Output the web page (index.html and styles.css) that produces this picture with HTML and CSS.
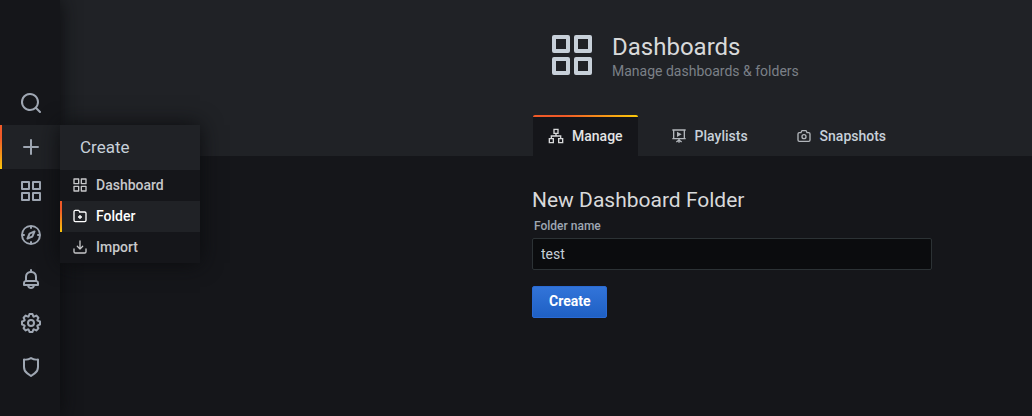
FILE: index.html
```html
<!DOCTYPE html>
<html lang="en">
<head>
<meta charset="utf-8">
<title>Dashboards</title>
<link rel="stylesheet" href="styles.css">
</head>
<body>
<svg class="sprite" aria-hidden="true">
  <symbol id="apps" viewBox="0 0 24 24"><path d="M10,13H3a1,1,0,0,0-1,1v7a1,1,0,0,0,1,1h7a1,1,0,0,0,1-1V14A1,1,0,0,0,10,13ZM9,20H4V15H9ZM21,2H14a1,1,0,0,0-1,1v7a1,1,0,0,0,1,1h7a1,1,0,0,0,1-1V3A1,1,0,0,0,21,2ZM20,9H15V4h5Zm1,4H14a1,1,0,0,0-1,1v7a1,1,0,0,0,1,1h7a1,1,0,0,0,1-1V14A1,1,0,0,0,21,13Zm-1,7H15V15h5ZM10,2H3A1,1,0,0,0,2,3v7a1,1,0,0,0,1,1h7a1,1,0,0,0,1-1V3A1,1,0,0,0,10,2ZM9,9H4V4H9Z"/></symbol>
</svg>
<div class="app">
  <nav class="sidebar" aria-label="Main">
    <a class="side-item" href="#" aria-label="Search"><svg class="icon-lg" viewBox="0 0 24 24"><path d="M21.71,20.29,18,16.61A9,9,0,1,0,16.61,18l3.68,3.68a1,1,0,0,0,1.42,0A1,1,0,0,0,21.71,20.29ZM11,18a7,7,0,1,1,7-7A7,7,0,0,1,11,18Z"/></svg></a>
    <div class="side-group">
      <a class="side-item active" href="#" aria-label="Create"><svg class="icon-lg" viewBox="0 0 24 24"><path d="M19,11H13V5a1,1,0,0,0-2,0v6H5a1,1,0,0,0,0,2h6v6a1,1,0,0,0,2,0V13h6a1,1,0,0,0,0-2Z"/></svg></a>
      <div class="menu">
        <a class="menu-title" href="#">Create</a>
        <a class="menu-item" href="#"><svg class="icon"><use href="#apps"/></svg>Dashboard</a>
        <a class="menu-item current" href="#"><svg class="icon line" viewBox="0 0 24 24"><path d="M5 3.500h4.500a1.500 1.500 0 0 1 1.400 1L11.500 6H19a2 2 0 0 1 2 2v10.500a2 2 0 0 1-2 2H5a2 2 0 0 1-2-2v-13a2 2 0 0 1 2-2zM12 10.500v6M9 13.500h6"/></svg>Folder</a>
        <a class="menu-item" href="#"><svg class="icon" viewBox="0 0 24 24"><path d="M21,14a1,1,0,0,0-1,1v4a1,1,0,0,1-1,1H5a1,1,0,0,1-1-1V15a1,1,0,0,0-2,0v4a3,3,0,0,0,3,3H19a3,3,0,0,0,3-3V15A1,1,0,0,0,21,14Zm-9.71,1.71a1,1,0,0,0,.33.21.94.94,0,0,0,.76,0,1,1,0,0,0,.33-.21l4-4a1,1,0,0,0-1.42-1.42L13,12.59V3a1,1,0,0,0-2,0v9.59l-2.29-2.3a1,1,0,1,0-1.42,1.42Z"/></svg>Import</a>
      </div>
    </div>
    <a class="side-item" href="#" aria-label="Dashboards"><svg class="icon-lg"><use href="#apps"/></svg></a>
    <a class="side-item" href="#" aria-label="Explore"><svg class="icon-lg" viewBox="0 0 24 24"><path d="M12,2A10,10,0,1,0,22,12,10,10,0,0,0,12,2Zm1,17.93V19a1,1,0,0,0-2,0v.93A8,8,0,0,1,4.07,13H5a1,1,0,0,0,0-2H4.07A8,8,0,0,1,11,4.07V5a1,1,0,0,0,2,0V4.07A8,8,0,0,1,19.93,11H19a1,1,0,0,0,0,2h.93A8,8,0,0,1,13,19.93ZM15.14,7.55l-5,2.12a1,1,0,0,0-.52.52l-2.12,5a1,1,0,0,0,.21,1.1,1,1,0,0,0,.7.3.93.93,0,0,0,.4-.09l5-2.12a1,1,0,0,0,.52-.52l2.12-5a1,1,0,0,0-1.31-1.31Zm-2.49,5.1-2.28,1,1-2.28,2.28-1Z"/></svg></a>
    <a class="side-item" href="#" aria-label="Alerting"><svg class="icon-lg" viewBox="0 0 24 24"><path d="M18,13.18V10a6,6,0,0,0-5-5.91V3a1,1,0,0,0-2,0V4.09A6,6,0,0,0,6,10v3.18A3,3,0,0,0,4,16v2a1,1,0,0,0,1,1H8.14a4,4,0,0,0,7.72,0H19a1,1,0,0,0,1-1V16A3,3,0,0,0,18,13.18ZM8,10a4,4,0,0,1,8,0v3H8Zm4,10a2,2,0,0,1-1.72-1h3.44A2,2,0,0,1,12,20Zm6-3H6V16a1,1,0,0,1,1-1H17a1,1,0,0,1,1,1Z"/></svg></a>
    <a class="side-item" href="#" aria-label="Configuration"><svg class="icon-lg" viewBox="0 0 24 24"><path d="M21.32,9.55l-1.89-.63.89-1.78A1,1,0,0,0,20.13,6L18,3.87a1,1,0,0,0-1.15-.19l-1.78.89-.63-1.89A1,1,0,0,0,13.5,2h-3a1,1,0,0,0-.95.68L8.92,4.57,7.14,3.68A1,1,0,0,0,6,3.87L3.87,6a1,1,0,0,0-.19,1.15l.89,1.78-1.89.63A1,1,0,0,0,2,10.5v3a1,1,0,0,0,.68.95l1.89.63-.89,1.78A1,1,0,0,0,3.87,18L6,20.13a1,1,0,0,0,1.15.19l1.78-.89.63,1.89a1,1,0,0,0,.95.68h3a1,1,0,0,0,.95-.68l.63-1.89,1.78.89A1,1,0,0,0,18,20.13L20.13,18a1,1,0,0,0,.19-1.15l-.89-1.78,1.89-.63A1,1,0,0,0,22,13.5v-3A1,1,0,0,0,21.32,9.55ZM20,12.78l-1.2.4A2,2,0,0,0,17.64,16l.57,1.14-1.1,1.1L16,17.64a2,2,0,0,0-2.79,1.16l-.4,1.2H11.22l-.4-1.2A2,2,0,0,0,8,17.64l-1.14.57-1.1-1.1L6.36,16A2,2,0,0,0,5.2,13.18L4,12.78V11.22l1.2-.4A2,2,0,0,0,6.36,8L5.79,6.89l1.1-1.1L8,6.36A2,2,0,0,0,10.82,5.2l.4-1.2h1.56l.4,1.2A2,2,0,0,0,16,6.36l1.14-.57,1.1,1.1L17.64,8a2,2,0,0,0,1.16,2.79l1.2.4ZM12,8a4,4,0,1,0,4,4A4,4,0,0,0,12,8Zm0,6a2,2,0,1,1,2-2A2,2,0,0,1,12,14Z"/></svg></a>
    <a class="side-item" href="#" aria-label="Server Admin"><svg class="icon-lg" viewBox="0 0 24 24"><path d="M19.63,3.65a1,1,0,0,0-.84-.2,8,8,0,0,1-6.22-1.27,1,1,0,0,0-1.14,0A8,8,0,0,1,5.21,3.45a1,1,0,0,0-.84.2A1,1,0,0,0,4,4.43v7.45a9,9,0,0,0,3.77,7.33l3.65,2.6a1,1,0,0,0,1.16,0l3.65-2.6A9,9,0,0,0,20,11.88V4.43A1,1,0,0,0,19.63,3.65ZM18,11.88a7,7,0,0,1-2.93,5.7L12,19.77,8.93,17.58A7,7,0,0,1,6,11.88V5.58a10,10,0,0,0,6-1.39,10,10,0,0,0,6,1.39Z"/></svg></a>
  </nav>
  <main class="main">
    <header class="page-header">
      <div class="heading">
        <svg class="icon-xl"><use href="#apps"/></svg>
        <div>
          <h1 class="title">Dashboards</h1>
          <div class="subtitle">Manage dashboards &amp; folders</div>
        </div>
      </div>
      <nav class="tabs" aria-label="Dashboards sections">
        <a class="tab selected" href="#"><svg class="icon line" viewBox="0 0 24 24"><path d="M9 2h6v6H9zM2 16h6v6H2zM16 16h6v6h-6zM12 8v4M5 16v-4h14v4"/></svg>Manage</a>
        <a class="tab" href="#"><svg class="icon line" viewBox="0 0 24 24"><path d="M2 3h20M4 3v13h16V3M2 16h20M12 16v6M12 18l-4 3M12 18l4 3"/><path d="M9 5.500l7 4-7 4z" fill="currentColor" stroke="none"/></svg>Playlists</a>
        <a class="tab" href="#"><svg class="icon line" viewBox="0 0 24 24"><path d="M5 7h2.500l1-2.300A1 1 0 0 1 9.500 4h5a1 1 0 0 1 1 .7L16.500 7H19a2 2 0 0 1 2 2v9a2 2 0 0 1-2 2H5a2 2 0 0 1-2-2V9a2 2 0 0 1 2-2z"/><circle cx="12" cy="13" r="3"/></svg>Snapshots</a>
      </nav>
    </header>
    <form class="content">
      <h2 class="form-title">New Dashboard Folder</h2>
      <label class="label" for="folder-name">Folder name</label>
      <input class="input" id="folder-name" type="text" value="test">
      <button class="button" type="button">Create</button>
    </form>
  </main>
</div>
</body>
</html>
```
FILE: styles.css
```css
* {
  box-sizing: border-box;
}

body {
  margin: 0;
  background: #161719;
  color: #d8d9da;
  font: 14px/20px Roboto, "Liberation Sans", sans-serif;
}

a {
  color: inherit;
  text-decoration: none;
}

h1,
h2 {
  margin: 0;
  font-weight: 400;
}

svg {
  flex: none;
  fill: currentColor;
}

.sprite {
  display: none;
}

.icon {
  width: 16px;
  height: 16px;
}

.icon-lg {
  width: 24px;
  height: 24px;
}

.icon-xl {
  width: 48px;
  height: 48px;
  color: #c7d0d9;
}

.line {
  fill: none;
  stroke: currentColor;
  stroke-width: 2;
}

.app {
  display: flex;
  min-height: 100vh;
  background: #15161a;
}

.sidebar {
  position: relative;
  z-index: 1;
  flex: none;
  width: 60px;
  padding-top: 81px;
  background: #15161a;
  box-shadow: 0 0 20px #0b0c0e;
  color: #9fa7b3;
}

.side-group {
  position: relative;
}

.side-item {
  display: flex;
  align-items: center;
  justify-content: center;
  height: 44px;
  border-left: 2px solid transparent;
}

.side-item.active,
.menu-item.current {
  background: #202226;
  border-image: linear-gradient(#f05a28 30%, #fbca0a) 1;
}

.menu {
  position: absolute;
  top: 0;
  left: 100%;
  width: 140px;
  background: #15161a;
  box-shadow: 0 0 20px #0b0c0e;
  color: #c7c8ca;
  font-weight: 500;
}

.menu-title {
  display: block;
  padding: 12px 20px 13px;
  background: #202226;
  color: #c7d0d9;
  font-size: 17px;
  font-weight: 400;
}

.menu-item {
  display: flex;
  align-items: center;
  gap: 8px;
  height: 31px;
  padding: 0 10px 1px;
  border-left: 2px solid transparent;
}

.menu-item.current {
  color: #fff;
}

.main {
  flex: 1;
  min-width: 0;
}

.page-header {
  padding: 29px 16px 0 472px;
  border-bottom: 1px solid #202226;
  background: #202226;
}

.heading {
  display: flex;
  align-items: center;
  gap: 16px;
  padding-left: 16px;
}

.title {
  padding-top: 4px;
  font-size: 24px;
  line-height: 28px;
}

.subtitle {
  color: #7b8087;
}

.tabs {
  display: flex;
  gap: 18px;
  margin-top: 34px;
  padding-left: 1px;
}

.tab {
  display: flex;
  align-items: center;
  gap: 8px;
  height: 40px;
  padding: 0 15px;
  border-top: 2px solid transparent;
  border-radius: 2px 2px 0 0;
  color: #c7d0d9;
  font-weight: 500;
}

.tab .icon {
  color: #b2b6bb;
}

.tab.selected {
  margin-bottom: -1px;
  height: 41px;
  padding-bottom: 1px;
  background: linear-gradient(#15161a, #15161a) padding-box, linear-gradient(to right, #f05a28 30%, #fbca0a) border-box;
  color: #e3e4e5;
}

.tab.selected .icon {
  color: #d8d9da;
}

.content {
  display: flex;
  flex-direction: column;
  align-items: flex-start;
  padding: 32px 16px 32px 472px;
}

.form-title {
  font-size: 21px;
  line-height: 24px;
}

.label {
  padding: 4px 2px 2px;
  color: #9fa7b3;
  font-size: 12px;
  line-height: 20px;
  font-weight: 500;
}

.input {
  width: 100%;
  max-width: 400px;
  height: 32px;
  padding: 0 8px;
  border: 1px solid #2c3235;
  border-radius: 2px;
  background: #0b0c0e;
  color: #c7d0d9;
  font: inherit;
}

.button {
  height: 32px;
  margin-top: 16px;
  padding: 0 15px 2px 16px;
  border: 1px solid #2a6ad4;
  border-radius: 2px;
  background: linear-gradient(#3274d9, #1f60c4);
  color: #fff;
  font: inherit;
  font-weight: 700;
}
```
